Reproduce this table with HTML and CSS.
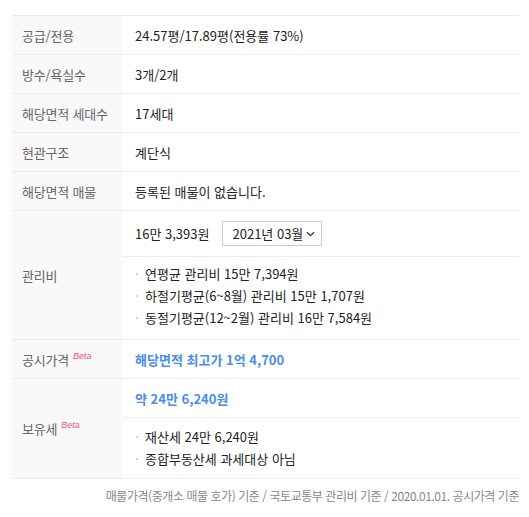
FILE: index.html
```html
<!DOCTYPE html>
<html lang="ko">
<head>
<meta charset="utf-8">
<link rel="stylesheet" href="styles.css">
</head>
<body>
<div class="wrap">
  <div class="table">
    <div class="row">
      <div class="th">공급/전용</div>
      <div class="td">24.57평/17.89평(전용률 73%)</div>
    </div>
    <div class="row">
      <div class="th">방수/욕실수</div>
      <div class="td">3개/2개</div>
    </div>
    <div class="row">
      <div class="th">해당면적 세대수</div>
      <div class="td">17세대</div>
    </div>
    <div class="row">
      <div class="th">현관구조</div>
      <div class="td">계단식</div>
    </div>
    <div class="row">
      <div class="th">해당면적 매물</div>
      <div class="td">등록된 매물이 없습니다.</div>
    </div>
    <div class="row">
      <div class="th">관리비</div>
      <div class="tdgroup">
        <div class="sub sub-fee">
          <span class="fee">16만 3,393원</span>
          <span class="select">2021년 03월<svg class="chev" width="9" height="6" viewBox="0 0 9 6"><path d="M1 1.2 L4.5 4.6 L8 1.2" fill="none" stroke="#333" stroke-width="1.3"/></svg></span>
        </div>
        <ul class="list list-fee">
          <li>연평균 관리비 15만 7,394원</li>
          <li>하절기평균(6~8월) 관리비 15만 1,707원</li>
          <li>동절기평균(12~2월) 관리비 16만 7,584원</li>
        </ul>
      </div>
    </div>
    <div class="row">
      <div class="th"><span>공시가격<span class="beta">Beta</span></span></div>
      <div class="td blue">해당면적 최고가 1억 4,700</div>
    </div>
    <div class="row">
      <div class="th"><span>보유세<span class="beta">Beta</span></span></div>
      <div class="tdgroup">
        <div class="sub sub-tax blue">약 24만 6,240원</div>
        <ul class="list list-tax">
          <li>재산세 24만 6,240원</li>
          <li>종합부동산세 과세대상 아님</li>
        </ul>
      </div>
    </div>
  </div>
  <p class="foot">매물가격(중개소 매물 호가) 기준 / 국토교통부 관리비 기준 / 2020.01.01. 공시가격 기준</p>
</div>
</body>
</html>
```
FILE: styles.css
```css
* { box-sizing: border-box; }
html, body { margin: 0; padding: 0; background: #fff; }
body {
  font-family: "Noto Sans CJK KR", "Noto Sans", sans-serif;
  font-size: 13px;
  color: #222;
}
.wrap {
  margin: 15px 10px 0 12px;
}
.table {
  border-top: 1px solid #e9e9e9;
}
.row {
  display: grid;
  grid-template-columns: 110px 1fr;
  border-bottom: 1px solid #ececec;
}
.th {
  background: #f9f9f9;
  color: #666;
  padding-left: 10px;
  display: flex;
  align-items: center;
  min-height: 38px;
  letter-spacing: -0.2px;
}
.td {
  padding-left: 13px;
  display: flex;
  align-items: center;
  min-height: 38px;
}
.beta {
  display: inline-block;
  color: #f0506e;
  font-style: italic;
  font-size: 9px;
  font-weight: normal;
  font-family: "Liberation Sans", "Noto Sans", sans-serif;
  vertical-align: 6px;
  margin-left: 4px;
  letter-spacing: 0;
}
.tdgroup {
  display: flex;
  flex-direction: column;
}
.sub {
  padding-left: 13px;
  display: flex;
  align-items: center;
  border-bottom: 1px solid #ececec;
}
.sub-fee { height: 46px; }
.sub-tax { height: 39px; }
.fee { margin-right: 13px; }
.select {
  display: inline-flex;
  align-items: center;
  width: 100px;
  height: 25px;
  border: 1px solid #ccc;
  padding: 0 0 0 9px;
  color: #222;
}
.chev { margin-left: 3px; margin-top: 1px; }
.list {
  list-style: none;
  margin: 0;
  padding: 0 0 0 13px;
  line-height: 22px;
}
.list-fee { padding-top: 6px; padding-bottom: 10px; }
.list-tax { padding-top: 8px; padding-bottom: 8px; }
.list li { display: flex; }
.list li::before {
  content: "·";
  color: #b5b5b5;
  width: 10px;
  flex: none;
}
.blue {
  color: #4a8ee6;
  font-weight: bold;
}
.foot {
  margin: 0;
  padding-top: 8px;
  text-align: right;
  font-size: 12px;
  line-height: 18px;
  color: #888;
  letter-spacing: -0.45px;
}
```
